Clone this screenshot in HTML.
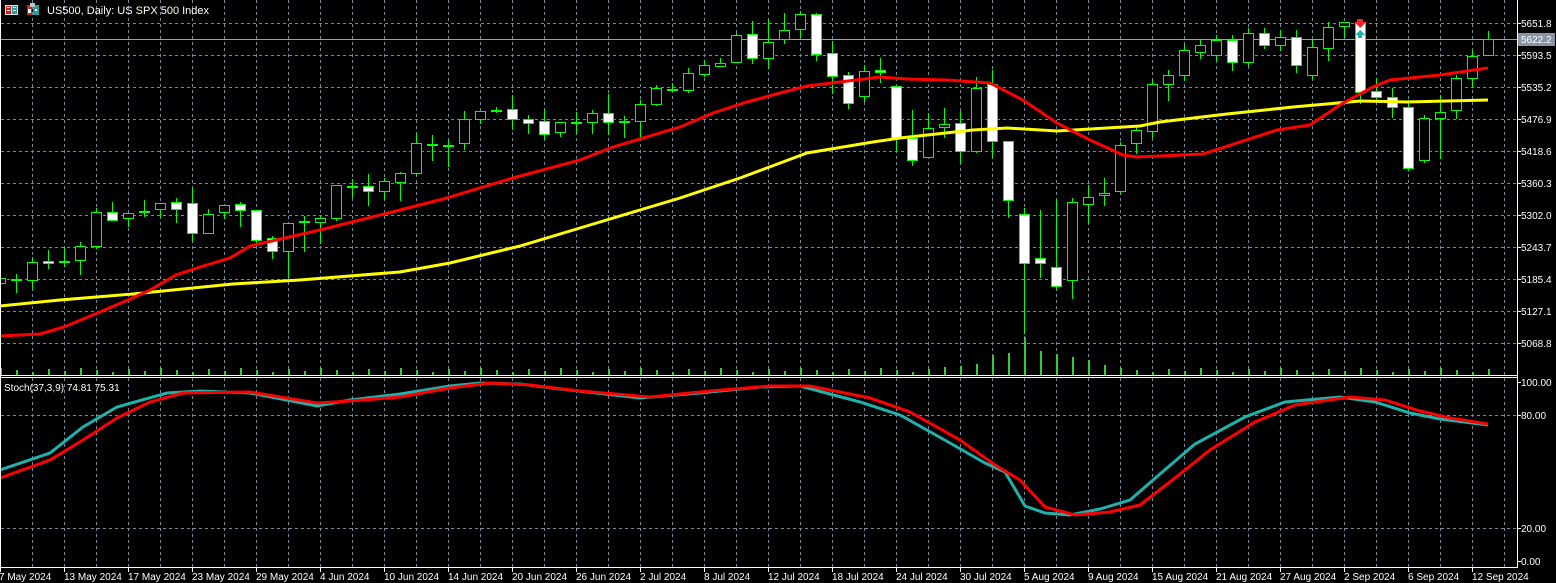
<!DOCTYPE html>
<html><head><meta charset="utf-8"><style>
html,body{margin:0;padding:0;background:#000;width:1556px;height:583px;overflow:hidden}
svg{display:block}
text{font-family:"Liberation Sans",sans-serif;font-size:10px;fill:#fff}
</style></head><body>
<svg id="s" width="1556" height="583" xmlns="http://www.w3.org/2000/svg" shape-rendering="crispEdges">
<rect width="1556" height="583" fill="#000"/>
<g id="grid" stroke="#778899" stroke-width="1" stroke-dasharray="3,3"></g>
<line x1="1" y1="39.5" x2="1517" y2="39.5" stroke="#a0a0a0"/>
<g id="vol" fill="#32cd32"></g>
<g id="cand"></g>
<polyline id="yel" fill="none" stroke="#ffff00" stroke-width="3" shape-rendering="auto"/>
<polyline id="red" fill="none" stroke="#ff0000" stroke-width="3" shape-rendering="auto"/>
<polyline id="st1" fill="none" stroke="#20b2aa" stroke-width="3" shape-rendering="auto"/>
<polyline id="st2" fill="none" stroke="#ff0000" stroke-width="3" shape-rendering="auto"/>
<line x1="0.5" y1="0" x2="0.5" y2="567" stroke="#fff"/>
<line x1="0" y1="375.5" x2="1517" y2="375.5" stroke="#fff"/>
<line x1="0" y1="377.5" x2="1517" y2="377.5" stroke="#fff"/>
<line x1="0" y1="567.5" x2="1517" y2="567.5" stroke="#fff"/>
<line x1="1517.5" y1="0" x2="1517.5" y2="568" stroke="#fff"/>
<g id="ticks" stroke="#fff"></g>
<path d="M1357 19h6v3h3l-6 6-6-6h3z" fill="#ff2020"/>
<path d="M1360 30l5 5h-3v3h-4v-3h-3z" fill="#20b2aa"/>
<rect x="5" y="5" width="13" height="10" fill="#e0e0e0"/><rect x="6" y="6" width="5" height="8" fill="#d02020"/><rect x="12" y="6" width="5" height="8" fill="#20a0a0"/><rect x="7" y="7" width="3" height="1" fill="#fff"/><rect x="7" y="10" width="3" height="1" fill="#fff"/><rect x="13" y="7" width="3" height="1" fill="#fff"/><rect x="13" y="10" width="3" height="1" fill="#fff"/>
<rect x="27" y="5" width="5" height="10" fill="#d02020"/><rect x="33" y="5" width="6" height="10" fill="#20a0a0"/><rect x="30" y="3" width="5" height="4" fill="#c0c0c0"/><rect x="28" y="9" width="3" height="4" fill="#fff"/><rect x="35" y="9" width="2" height="2" fill="#fff"/>
<text x="47" y="14" style="font-size:11px">US500, Daily:  US SPX 500 Index</text>
<text x="4" y="391">Stoch(37,3,9) 74.81 75.31</text>
<rect x="1518" y="33" width="37" height="13" fill="#8796a5"/>
<text x="1521" y="43">5622.2</text>
<text x="1521" y="27">5651.8</text>
<text x="1521" y="59">5593.5</text>
<text x="1521" y="91">5535.2</text>
<text x="1521" y="123">5476.9</text>
<text x="1521" y="155">5418.6</text>
<text x="1521" y="187">5360.3</text>
<text x="1521" y="219">5302.0</text>
<text x="1521" y="251">5243.7</text>
<text x="1521" y="283">5185.4</text>
<text x="1521" y="315">5127.1</text>
<text x="1521" y="347">5068.8</text>
<text x="1521" y="386">100.00</text>
<text x="1521" y="419">80.00</text>
<text x="1521" y="532">20.00</text>
<text x="1521" y="565">0.00</text>
<g id="dates">
<text x="-1" y="580">7 May 2024</text>
<text x="64" y="580">13 May 2024</text>
<text x="128" y="580">17 May 2024</text>
<text x="192" y="580">23 May 2024</text>
<text x="256" y="580">29 May 2024</text>
<text x="320" y="580">4 Jun 2024</text>
<text x="384" y="580">10 Jun 2024</text>
<text x="448" y="580">14 Jun 2024</text>
<text x="512" y="580">20 Jun 2024</text>
<text x="576" y="580">26 Jun 2024</text>
<text x="640" y="580">2 Jul 2024</text>
<text x="704" y="580">8 Jul 2024</text>
<text x="768" y="580">12 Jul 2024</text>
<text x="832" y="580">18 Jul 2024</text>
<text x="896" y="580">24 Jul 2024</text>
<text x="960" y="580">30 Jul 2024</text>
<text x="1024" y="580">5 Aug 2024</text>
<text x="1088" y="580">9 Aug 2024</text>
<text x="1152" y="580">15 Aug 2024</text>
<text x="1216" y="580">21 Aug 2024</text>
<text x="1280" y="580">27 Aug 2024</text>
<text x="1344" y="580">2 Sep 2024</text>
<text x="1408" y="580">6 Sep 2024</text>
<text x="1472" y="580">12 Sep 2024</text>
</g>
</svg>
<script>
var NS="http://www.w3.org/2000/svg";
function el(p,t,a){var e=document.createElementNS(NS,t);for(var k in a)e.setAttribute(k,a[k]);p.appendChild(e);return e;}
var g=document.getElementById('grid');
for(var x=32;x<1517;x+=32){el(g,'line',{x1:x+.5,y1:0,x2:x+.5,y2:375});el(g,'line',{x1:x+.5,y1:378,x2:x+.5,y2:567});}
for(var y=23;y<=343;y+=32){el(g,'line',{x1:1,y1:y+.5,x2:1517,y2:y+.5});}
[415,528].forEach(function(y){el(g,'line',{x1:1,y1:y+.5,x2:1517,y2:y+.5});});
var tk=document.getElementById('ticks');
for(var y=23;y<=343;y+=32)el(tk,'line',{x1:1517,y1:y+.5,x2:1521,y2:y+.5});
[382,415,528,561].forEach(function(y){el(tk,'line',{x1:1517,y1:y+.5,x2:1521,y2:y+.5});});
for(var x=0;x<1517;x+=64)el(tk,'line',{x1:x+.5,y1:567,x2:x+.5,y2:572});
var C=[[1,278,283,276,288],[2,279,279,274,292],[1,262,280,257,289],[0,261,263,250,268],[2,261,261,247,266],[1,246,260,242,274],[1,212,246,208,248],[0,212,220,202,220],[1,213,218,213,226],[2,211,211,200,216],[1,203,209,203,216],[0,202,209,198,222],[0,203,233,187,241],[1,214,233,209,233],[1,205,212,205,218],[0,204,210,202,226],[0,210,240,210,242],[0,238,251,236,258],[1,223,251,223,277],[2,221,221,216,251],[1,218,222,216,243],[1,185,218,185,220],[2,186,186,179,197],[0,186,191,174,205],[1,181,191,178,199],[1,173,182,172,200],[1,143,173,133,175],[2,144,144,135,160],[2,145,145,140,166],[1,119,143,111,149],[1,111,119,111,123],[2,110,110,107,112],[0,109,119,95,129],[0,119,123,115,133],[0,121,134,109,138],[1,122,132,122,136],[2,122,122,112,133],[1,113,122,110,133],[0,113,122,94,134],[2,121,121,116,137],[1,104,121,100,137],[1,88,104,85,105],[2,89,89,83,91],[1,73,90,68,92],[1,65,74,60,76],[1,63,66,58,66],[1,35,62,33,62],[0,34,58,21,63],[1,42,58,19,68],[1,30,39,13,43],[1,14,29,11,37],[0,14,54,13,60],[0,53,76,41,93],[0,75,103,72,108],[1,71,96,65,101],[0,70,72,58,82],[0,86,138,86,150],[0,138,160,110,165],[1,128,157,113,157],[1,124,127,108,137],[0,123,151,111,163],[1,88,151,77,152],[0,84,141,70,157],[0,141,200,141,217],[0,214,263,208,333],[0,258,263,210,277],[0,267,286,199,289],[1,202,280,198,298],[1,197,204,185,223],[1,193,195,178,205],[1,145,191,142,193],[1,130,143,127,153],[1,84,131,80,137],[1,75,84,70,100],[1,50,75,45,80],[1,45,52,40,58],[1,40,55,35,60],[0,40,62,35,70],[1,33,62,28,65],[0,33,45,28,48],[1,37,45,30,50],[0,37,65,30,72],[1,47,75,40,78],[1,27,48,22,60],[1,22,26,22,37],[0,22,92,22,103],[0,91,97,78,100],[0,97,107,88,117],[0,107,168,100,170],[1,118,160,115,162],[1,112,118,95,158],[1,78,110,75,118],[1,56,78,50,87],[1,39,55,31,55]];
var cg=document.getElementById('cand'),vg=document.getElementById('vol');
var V={62:355,63:353,64:337,65:351,66:354,67:357,68:360,61:364,69:365,60:366,59:367};
C.forEach(function(c,i){var x=i*16;
 el(cg,'rect',{x:x,y:c[3],width:1,height:c[4]-c[3]+1,fill:'#00ff00'});
 var h=c[2]-c[1];
 if(c[0]==2||h<2){el(cg,'rect',{x:x-5,y:c[1],width:11,height:2,fill:c[0]==0?'#fff':'#00ff00'});}
 else{el(cg,'rect',{x:x-5,y:c[1],width:11,height:h+1,fill:'#00ff00'});el(cg,'rect',{x:x-4,y:c[1]+1,width:9,height:h-1,fill:c[0]==0?'#fff':'#000'});}
 var vy=V[i]||(368+((i*7)%5));el(vg,'rect',{x:x,y:vy,width:2,height:375-vy});
});
function pts(a){return a.map(function(p){return p[0]+','+p[1]}).join(' ');}
document.getElementById('red').setAttribute('points',pts([[0,336],[40,334],[64,327],[100,312],[128,300],[150,290],[176,275],[200,267],[230,258],[250,246],[285,238],[320,230],[360,220],[400,210],[443,199],[513,178],[580,160],[613,147],[680,127],[713,113],[747,102],[780,93],[807,86],[840,82],[880,77],[907,79],[947,80],[990,83],[1023,100],[1057,123],[1090,140],[1123,155],[1137,157],[1203,154],[1277,130],[1310,125],[1343,103],[1373,87],[1390,80],[1440,75],[1488,68]]));
document.getElementById('yel').setAttribute('points',pts([[0,306],[60,300],[133,294],[233,284],[300,280],[400,272],[450,263],[520,246],[580,228],[640,210],[677,199],[740,178],[807,153],[873,142],[900,138],[973,130],[1007,128],[1057,131],[1107,128],[1140,126],[1160,122],[1227,114],[1293,107],[1360,101],[1407,102],[1488,100]]));
document.getElementById('st1').setAttribute('points',pts([[0,470],[50,453],[83,427],[117,407],[167,393],[200,391],[250,393],[317,406],[350,400],[400,394],[450,386],[480,383],[520,384],[560,389],[640,398],[700,393],[760,387],[800,386],[860,402],[900,415],[950,443],[985,463],[1005,472],[1025,506],[1045,513],[1070,515],[1100,509],[1130,500],[1160,474],[1195,444],[1245,417],[1285,402],[1340,397],[1375,402],[1410,413],[1440,419],[1488,425]]));
document.getElementById('st2').setAttribute('points',pts([[0,478],[50,460],[83,440],[117,418],[150,402],[183,393],[250,392],[317,403],[350,401],[400,397],[450,388],[490,383],[530,385],[580,391],[650,397],[710,391],[770,386],[810,386],[870,398],[910,412],[960,440],[995,465],[1020,480],[1045,507],[1075,515],[1110,512],[1140,505],[1175,478],[1210,450],[1255,422],[1295,405],[1350,397],[1385,400],[1420,411],[1450,418],[1488,424]]));
</script>
</body></html>
